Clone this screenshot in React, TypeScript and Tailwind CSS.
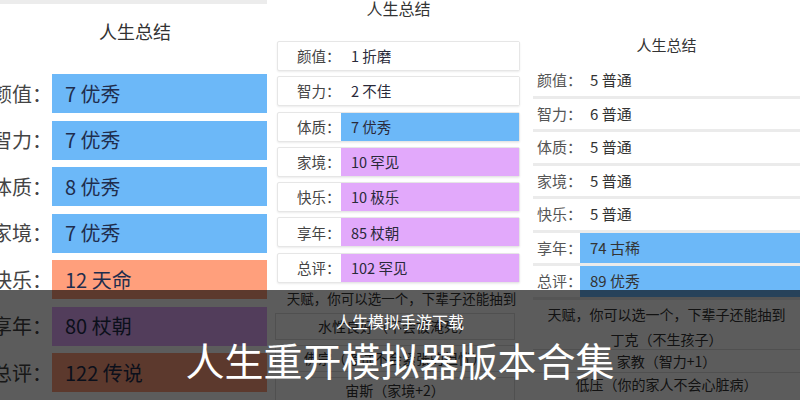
const font = { fontFamily: '"Noto Sans CJK SC", "Noto Sans", sans-serif' };

const BLUE = "bg-[#6cb8f8]";
const ORANGE = "bg-[#ff9f7c]";
const PURPLE = "bg-[#e2a9fb]";

const left = [
  { k: "颜值：", v: "7 优秀", c: BLUE },
  { k: "智力：", v: "7 优秀", c: BLUE },
  { k: "体质：", v: "8 优秀", c: BLUE },
  { k: "家境：", v: "7 优秀", c: BLUE },
  { k: "快乐：", v: "12 天命", c: ORANGE },
  { k: "享年：", v: "80 杖朝", c: PURPLE },
  { k: "总评：", v: "122 传说", c: ORANGE },
];

const mid = [
  { k: "颜值：", v: "1 折磨", c: "bg-white" },
  { k: "智力：", v: "2 不佳", c: "bg-white" },
  { k: "体质：", v: "7 优秀", c: BLUE },
  { k: "家境：", v: "10 罕见", c: PURPLE },
  { k: "快乐：", v: "10 极乐", c: PURPLE },
  { k: "享年：", v: "85 杖朝", c: PURPLE },
  { k: "总评：", v: "102 罕见", c: PURPLE },
];

const right = [
  { k: "颜值：", v: "5 普通", c: "bg-white" },
  { k: "智力：", v: "6 普通", c: "bg-white" },
  { k: "体质：", v: "5 普通", c: "bg-white" },
  { k: "家境：", v: "5 普通", c: "bg-white" },
  { k: "快乐：", v: "5 普通", c: "bg-white" },
  { k: "享年：", v: "74 古稀", c: BLUE },
  { k: "总评：", v: "89 优秀", c: BLUE },
];

const LeftPanel = () => (
  <div className="flex w-[270px] shrink-0 flex-col bg-white">
    <div className="h-[4px] w-[267px] bg-[#ececec]" />
    <div className="mt-[14px] text-center text-[18px] leading-[26px] text-[#333]">人生总结</div>
    <div className="mt-[30px] flex flex-col gap-[7.5px]">
      {left.map((r) => (
        <div key={r.k} className="flex h-[39px] w-[267px] items-center">
          <div className="flex w-[52px] shrink-0 justify-end overflow-hidden whitespace-nowrap text-[20px] text-[#444]">
            {r.k}
          </div>
          <div className={`flex h-full flex-1 items-center pl-[13px] text-[20px] text-[#1f2d4d] ${r.c}`}>
            {r.v}
          </div>
        </div>
      ))}
    </div>
  </div>
);

const MidPanel = () => (
  <div className="flex w-[263px] shrink-0 flex-col bg-white">
    <div className="-mt-[2px] pr-[6px] text-center text-[16px] leading-[20px] text-[#333]">人生总结</div>
    <div className="mt-[23px] ml-[7px] flex w-[243px] flex-col gap-[5.3px]">
      {mid.map((r) => (
        <div
          key={r.k}
          className="flex h-[30px] items-center rounded-[2px] border border-[#e6e6e6] bg-white shadow-[0_1px_2px_rgba(0,0,0,0.08)]"
        >
          <div className="w-[63px] shrink-0 whitespace-nowrap pl-[19px] text-[14.5px] text-[#444]">{r.k}</div>
          <div className={`flex h-full flex-1 items-center whitespace-nowrap pl-[10px] text-[14.5px] text-[#2a2a3a] ${r.c}`}>
            {r.v}
          </div>
        </div>
      ))}
    </div>
    <div className="mt-[6px] whitespace-nowrap text-center text-[13.5px] leading-[18px] text-[#333]">
      天赋，你可以选一个，下辈子还能抽到
    </div>
    <div className="mt-[6px] ml-[5px] flex w-[240px] flex-col gap-[5px]">
      <div className="flex h-[27px] items-center justify-center whitespace-nowrap border border-[#ddd] text-[14px] text-[#333]">
        水性良好（不会被淹死）
      </div>
      <div className="flex h-[27px] items-center justify-center whitespace-nowrap border border-[#ddd] text-[14px] text-[#333]">
        佛宗（考试不会紧张的担忧）
      </div>
      <div className="flex h-[27px] items-center justify-center whitespace-nowrap border border-[#ddd] text-[14px] text-[#333]">
        宙斯（家境+2）
      </div>
    </div>
  </div>
);

const RightPanel = () => (
  <div className="flex flex-1 flex-col bg-white">
    <div className="mt-[35px] text-center text-[15px] leading-[20px] text-[#333]">人生总结</div>
    <div className="mt-[10px] flex flex-col">
      {right.map((r) => (
        <div key={r.k} className="flex h-[33.5px] flex-col">
          <div className="flex h-[30.5px] items-center">
            <div className="w-[47px] shrink-0 whitespace-nowrap pl-[4px] text-[15px] text-[#555]">{r.k}</div>
            <div className={`flex h-full flex-1 items-center whitespace-nowrap pl-[10px] text-[15px] text-[#333] ${r.c}`}>
              {r.v}
            </div>
          </div>
          <div className="h-[3px] bg-[#ebebeb]" />
        </div>
      ))}
    </div>
    <div className="mt-[4px] whitespace-nowrap text-center text-[14px] leading-[20px] text-[#333]">
      天赋，你可以选一个，下辈子还能抽到
    </div>
    <div className="mt-[4px] flex flex-col whitespace-nowrap text-center text-[14px] text-[#333]">
      <div className="h-[22px] border-b border-[#ddd] leading-[22px]">丁克（不生孩子）</div>
      <div className="h-[23px] border-b border-[#ddd] leading-[23px]">家教（智力+1）</div>
      <div className="h-[23px] leading-[23px]">低压（你的家人不会心脏病）</div>
    </div>
  </div>
);

export default function App() {
  return (
    <div className="relative flex h-[400px] w-[800px] overflow-hidden bg-white" style={font}>
      <LeftPanel />
      <MidPanel />
      <RightPanel />
      <div className="absolute inset-x-0 top-[290px] bottom-0 flex flex-col items-center bg-[rgba(0,0,0,0.64)] text-white">
        <div className="mt-[21px] text-[16px] leading-[20px]">人生模拟手游下载</div>
        <div className="mt-[3px] text-[39px] leading-[50px]">人生重开模拟器版本合集</div>
      </div>
    </div>
  );
}
